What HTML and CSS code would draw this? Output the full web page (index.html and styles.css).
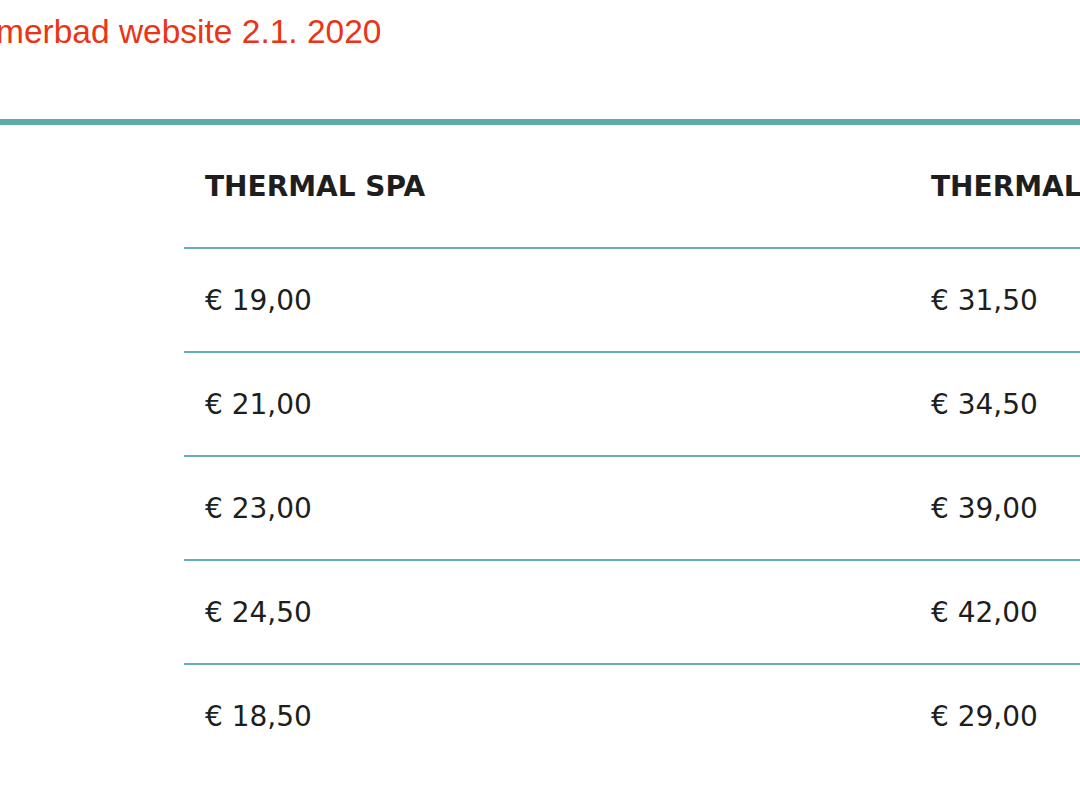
FILE: index.html
```html
<!DOCTYPE html>
<html lang="de">
<head>
<meta charset="utf-8">
<title>Preise</title>
<link rel="stylesheet" href="styles.css">
</head>
<body>
<div class="page">
<div class="note">merbad website 2.1. 2020</div>
<div class="rule"></div>
<table class="prices">
  <colgroup>
    <col class="c-spacer">
    <col class="c-price">
    <col class="c-price">
  </colgroup>
  <thead>
    <tr><th class="spacer"></th><th>THERMAL SPA</th><th>THERMAL SPA &amp; SAUNA</th></tr>
  </thead>
  <tbody>
    <tr><td class="spacer"></td><td>€ 19,00</td><td>€ 31,50</td></tr>
    <tr><td class="spacer"></td><td>€ 21,00</td><td>€ 34,50</td></tr>
    <tr><td class="spacer"></td><td>€ 23,00</td><td>€ 39,00</td></tr>
    <tr><td class="spacer"></td><td>€ 24,50</td><td>€ 42,00</td></tr>
    <tr class="last"><td class="spacer"></td><td>€ 18,50</td><td>€ 29,00</td></tr>
  </tbody>
</table>
</div>
</body>
</html>
```
FILE: styles.css
```css
html, body {
  margin: 0;
  padding: 0;
  background: #ffffff;
}
body {
  font-family: "DejaVu Sans", Verdana, sans-serif;
  color: #1e1e1e;
}
.page {
  width: 1080px;
  height: 808px;
  overflow: hidden;
}
.note {
  font-family: "Liberation Sans", Arial, Helvetica, sans-serif;
  font-size: 33.5px;
  color: #ea3416;
  line-height: 38px;
  padding-top: 13px;
  margin-left: -4px;
  white-space: nowrap;
}
.rule {
  margin-top: 68px;
  height: 6px;
  background: #5eabab;
}
.prices {
  border-collapse: collapse;
  table-layout: fixed;
  width: 1636px;
}
.c-spacer { width: 184px; }
.c-price { width: 726px; }
.prices .spacer {
  padding: 0;
  border: none;
}
.prices th, .prices td {
  text-align: left;
  padding: 0 0 0 21px;
  white-space: nowrap;
  overflow: hidden;
  font-size: 28px;
  vertical-align: middle;
  border-bottom: 2px solid #5fb0b0;
}
.prices th {
  font-weight: bold;
  height: 122px;
}
.prices td {
  height: 102px;
}
.prices th.spacer,
.prices td.spacer,
.prices tr.last td {
  border-bottom: none;
}
```
